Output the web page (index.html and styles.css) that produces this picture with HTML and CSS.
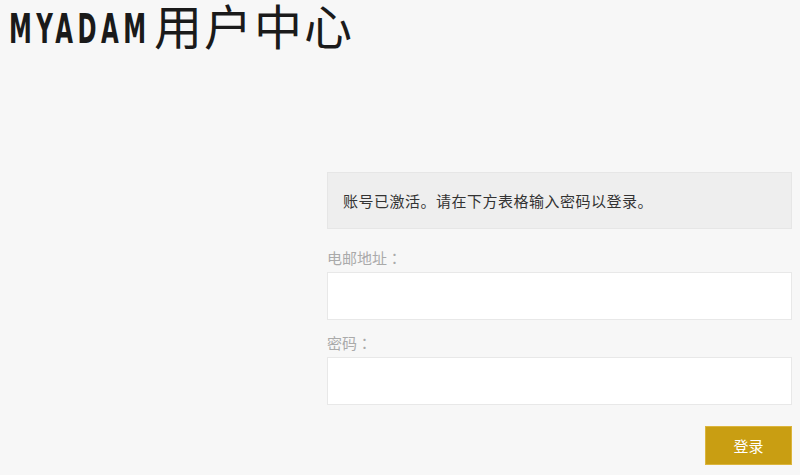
FILE: index.html
```html
<!DOCTYPE html>
<html>
<head>
    <title>MYADAM用户中心</title>
    <link rel="stylesheet" href="styles.css">
</head>
<body>
    <h1 class="site-title"><span class="brand">MYADAM</span>用户中心</h1>

    <div class="login-panel">
        <div class="notice">账号已激活。请在下方表格输入密码以登录。</div>

        <div class="field">
            <label for="email">电邮地址<span class="colon">：</span></label>
            <input type="text" id="email">
        </div>

        <div class="field">
            <label for="password">密码<span class="colon">：</span></label>
            <input type="password" id="password">
        </div>

        <div class="actions">
            <button type="button">登录</button>
        </div>
    </div>
</body>
</html>
```

FILE: styles.css
```css
body {
    margin: 0;
    background-color: #f7f7f7;
    font-family: "Noto Sans CJK SC", "Noto Sans", sans-serif;
    color: #333;
}
.site-title {
    margin: 0;
    height: 60px;
    padding: 0 0 0 9px;
    font-size: 48px;
    font-weight: normal;
    line-height: 48px;
    letter-spacing: 2px;
    color: #1a1a1a;
    white-space: nowrap;
    font-family: "Noto Sans CJK SC", sans-serif;
}
/* narrow condensed look for the latin part of the logo */
.brand {
    display: inline-block;
    vertical-align: 2px;
    font-family: "DejaVu Sans", sans-serif;
    font-weight: bold;
    font-size: 41px;
    letter-spacing: 8px;
    transform: scaleX(0.56);
    transform-origin: left center;
    margin-right: -108px;
}
.login-panel {
    width: 465px;
    margin: 112px 8px 0 auto;
}
.notice {
    height: 55px;
    line-height: 55px;
    padding: 0 15px;
    background-color: #eeeeee;
    border: 1px solid #e6e6e6;
    font-size: 15px;
    letter-spacing: 0.5px;
    color: #333;
    margin-bottom: 19px;
}
.field {
    margin-bottom: 13px;
}
.field label {
    display: block;
    height: 20px;
    line-height: 20px;
    margin-bottom: 4px;
    font-size: 15px;
    color: #aaa;
}
.colon {
    font-family: "Noto Sans CJK TC", sans-serif;
}
.field input {
    display: block;
    box-sizing: border-box;
    width: 100%;
    height: 48px;
    border: 1px solid #e8e8e8;
    background-color: #fff;
    outline: none;
}
.actions {
    display: flex;
    justify-content: flex-end;
    padding-top: 8px;
}
.actions button {
    width: 87px;
    height: 39px;
    background-color: #c99e12;
    border: 1px solid #dcb53c;
    color: #fff;
    font-family: "Noto Sans CJK SC", sans-serif;
    font-size: 15px;
    cursor: pointer;
}
```
